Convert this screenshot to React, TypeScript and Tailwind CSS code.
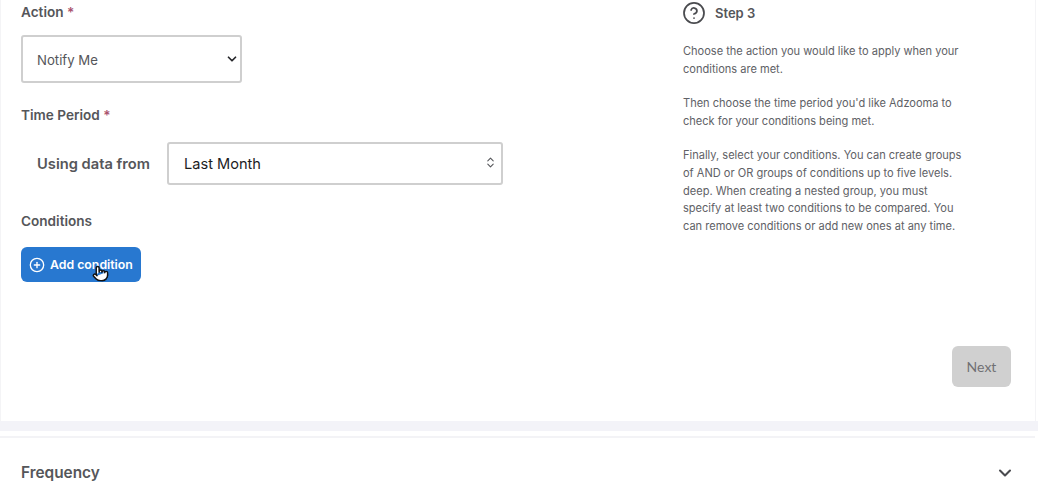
import { ChevronDown, ChevronsUpDown, CirclePlus, CircleHelp, Pointer } from 'lucide-react';

const FONT = "font-['Inter','Noto_Sans',sans-serif]";

function Label({ text, required }: { text: string; required?: boolean }) {
  return (
    <div className="text-[13.6px] leading-[18px] font-semibold text-[#55565a]">
      {text}
      {required && <span className="text-[#a8506c]"> *</span>}
    </div>
  );
}

const help = [
  ['Choose the action you would like to apply when your', 'conditions are met.'],
  ["Then choose the time period you'd like Adzooma to", 'check for your conditions being met.'],
  [
    'Finally, select your conditions. You can create groups',
    'of AND or OR groups of conditions up to five levels.',
    'deep. When creating a nested group, you must',
    'specify at least two conditions to be compared. You',
    'can remove conditions or add new ones at any time.',
  ],
];

export default function App() {
  return (
    <div className={`${FONT} w-[1038px] h-[496px] overflow-hidden bg-white flex flex-col`}>
      {/* step card */}
      <div className="h-[421px] shrink-0 flex border-x border-[#f4f4f6] mr-[2px]">
        <div className="w-[682px] pl-[20px] pt-[3px]">
          <Label text="Action" required />
          <div className="relative mt-[14px] w-[221px]">
            <select className="appearance-none w-full h-[48px] pl-[14px] pt-[3px] bg-white border-2 border-[#cfcfcf] rounded-[3px] text-[13.2px] text-[#55565a] outline-none">
              <option>Notify Me</option>
            </select>
            <ChevronDown size={14} strokeWidth={3} className="absolute right-[3px] top-[17px] text-[#26272b] pointer-events-none" />
          </div>

          <div className="mt-[23px]">
            <Label text="Time Period" required />
          </div>
          <div className="mt-[18px] flex items-center">
            <span className="ml-[16px] pt-[1px] w-[130px] text-[14.7px] font-semibold text-[#55565a]">Using data from</span>
            <div className="relative w-[336px]">
              <select className="appearance-none w-full h-[43px] pl-[15px] pt-[2px] bg-white border-2 border-[#cfcfcf] rounded-[3px] text-[14.6px] text-[#1c1c1e] outline-none">
                <option>Last Month</option>
              </select>
              <ChevronsUpDown size={13} strokeWidth={2} className="absolute right-[6px] top-[14px] text-[#55565a] pointer-events-none" />
            </div>
          </div>

          <div className="mt-[27px]">
            <Label text="Conditions" />
          </div>
          <div className="relative mt-[17px] w-[120px] h-[35px] bg-[#2878d0] rounded-[6px] flex items-center pl-[8px] pt-[1px] gap-[5px] text-white text-[12.3px] font-semibold">
            <CirclePlus size={16} strokeWidth={2} />
            <span>Add condition</span>
            <Pointer size={17} strokeWidth={2} fill="#ffffff" className="absolute left-[71px] top-[18px] text-[#111111]" />
          </div>
        </div>

        <div className="flex-1 flex flex-col pt-[1px] pr-[24px]">
          <div className="flex items-center gap-[9px] -ml-px">
            <CircleHelp size={24} strokeWidth={1.75} className="text-[#4a4b4f]" />
            <span className="pt-[1px] text-[13px] font-semibold text-[#55565a]">Step 3</span>
          </div>
          <div className="mt-[18px] flex flex-col gap-[17px]">
            {help.map((para, i) => (
              <div key={i} className="text-[11.05px] leading-[17.6px] text-[#606166] whitespace-nowrap">
                {para.map(line => (
                  <div key={line}>{line}</div>
                ))}
              </div>
            ))}
          </div>
          <button className="mt-[111px] self-end w-[59px] h-[41px] bg-[#d0d0d0] rounded-[6px] text-[14px] text-[#707074] font-['Lato',sans-serif]">
            Next
          </button>
        </div>
      </div>

      <div className="h-[10px] shrink-0 bg-[#f3f3f8]" />
      <div className="h-[5px] shrink-0 bg-white" />

      {/* collapsed card */}
      <div className="flex-1 flex items-center justify-between pl-[21px] pr-[20px] pt-[12px] border-t-2 border-[#f3f3f6] mr-[3px]">
        <span className="text-[15.4px] font-semibold text-[#55565a]">Frequency</span>
        <ChevronDown size={20} strokeWidth={2.5} className="text-[#4a4b4f]" />
      </div>
    </div>
  );
}
